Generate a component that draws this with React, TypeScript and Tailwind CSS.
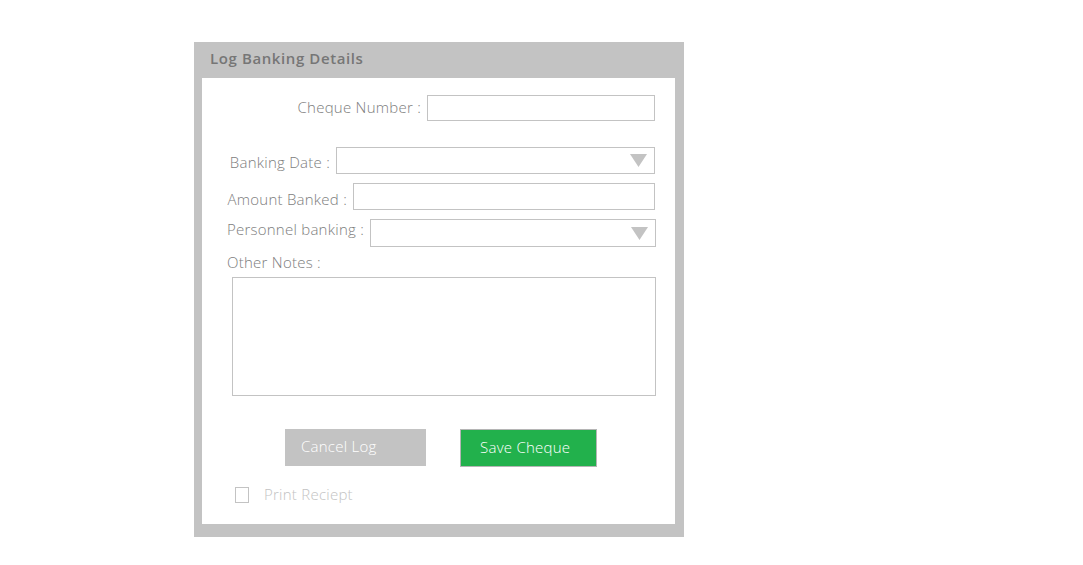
import React from 'react';

const font = { fontFamily: '"Open Sans", "Noto Sans", sans-serif' };

function Arrow() {
    return (
        <svg width="17" height="13" viewBox="0 0 17 13" className="mr-[7px]">
            <polygon points="0,0 17,0 8.5,13" fill="#c3c3c3" />
        </svg>
    );
}

export default function App() {
    return (
        <div className="w-[1083px] h-[565px] bg-white pt-[42px] pl-[194px]" style={font}>
            <div className="w-[490px] h-[495px] bg-[#c3c3c3] flex flex-col pl-[8px] pr-[9px] pb-[13px]">
                <div className="h-[36px] flex items-center pl-[8px] pb-[3px] text-[15px] font-semibold text-[#767676] tracking-[0.6px]">
                    Log Banking Details
                </div>
                <div className="flex-1 bg-white flex flex-col text-[15px] font-light text-[#7d7d7d] tracking-[0.25px]">
                    <div className="mt-[17px] h-[26px] flex items-center justify-end pr-[20px]">
                        <span className="mr-[6px] pb-[2px]">Cheque Number :</span>
                        <div className="w-[228px] h-[26px] border border-[#c3c3c3]" />
                    </div>

                    <div className="mt-[26px] h-[27px] flex items-center justify-end pr-[20px]">
                        <span className="mr-[6px] pt-[3px]">Banking Date :</span>
                        <div className="w-[319px] h-[27px] border border-[#c3c3c3] flex items-center justify-end">
                            <Arrow />
                        </div>
                    </div>

                    <div className="mt-[9px] h-[27px] flex items-center justify-end pr-[20px]">
                        <span className="mr-[6px] pt-[5px]">Amount Banked :</span>
                        <div className="w-[302px] h-[27px] border border-[#c3c3c3]" />
                    </div>

                    <div className="mt-[9px] h-[28px] flex items-center justify-end pr-[19px]">
                        <span className="mr-[6px] pb-[7px]">Personnel banking :</span>
                        <div className="w-[286px] h-[28px] border border-[#c3c3c3] flex items-center justify-end">
                            <Arrow />
                        </div>
                    </div>

                    <div className="mt-[5px] pl-[25px] leading-[20px]">Other Notes :</div>

                    <div className="mt-[5px] ml-[30px] w-[424px] h-[119px] border border-[#c3c3c3]" />

                    <div className="mt-[33px] flex items-start pl-[83px]">
                        <button className="w-[141px] h-[37px] bg-[#c3c3c3] text-white text-[15px] font-light text-left pl-[16px] pb-[3px]">
                            Cancel Log
                        </button>
                        <button className="ml-[34px] w-[137px] h-[38px] bg-[#22b14c] border border-[#b5b5b5] text-white text-[15px] font-light text-left pl-[19px] pb-[2px]">
                            Save Cheque
                        </button>
                    </div>

                    <div className="mt-[16px] flex items-center pl-[33px]">
                        <div className="w-[14px] h-[16px] border border-[#c3c3c3]" />
                        <span className="ml-[15px] text-[#c3c3c3] pb-[2px]">Print Reciept</span>
                    </div>
                </div>
            </div>
        </div>
    );
}
